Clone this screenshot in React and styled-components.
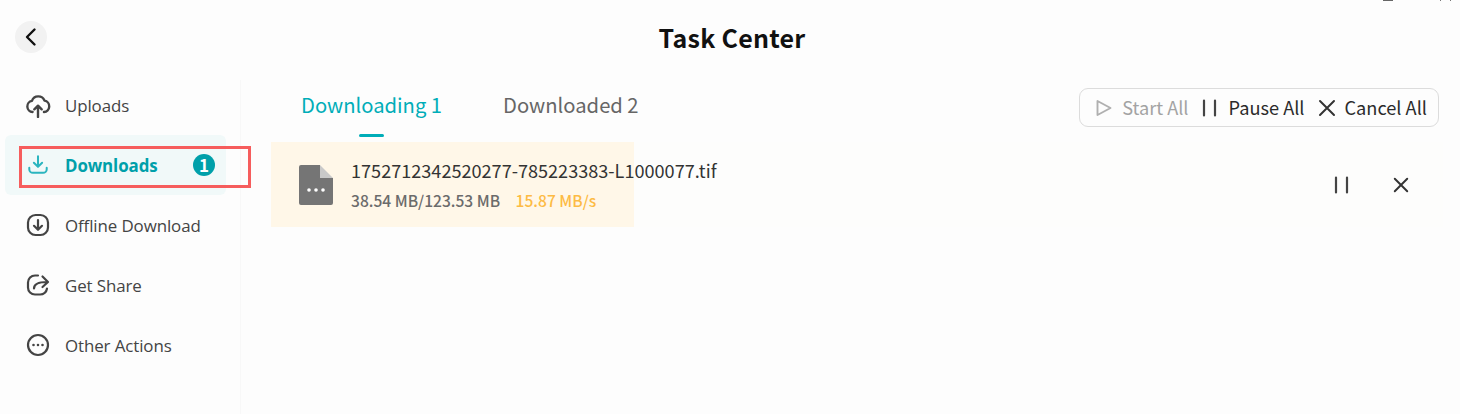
import React from 'react'
import styled, { createGlobalStyle } from 'styled-components'

const cjk = '"Noto Sans CJK SC", "Noto Sans", sans-serif'

const Global = createGlobalStyle`
  html, body { margin: 0; padding: 0; background: #fdfdfd; }
  body { font-family: ${cjk}; overflow: hidden; }
`

const Page = styled.div`
  position: relative;
  width: 1460px;
  height: 414px;
  background: #fdfdfd;
  overflow: hidden;
`

const Header = styled.header`
  height: 75px;
  padding-left: 15px;
  display: flex;
  align-items: center;
`

const BackButton = styled.button`
  width: 32px;
  height: 32px;
  margin-top: -1px;
  border: 0;
  padding: 0;
  border-radius: 50%;
  background: #f2f2f2;
  display: flex;
  align-items: center;
  justify-content: center;
`

const Title = styled.h1`
  flex: 1;
  margin: -2px 0 0 -47px;
  text-align: center;
  padding-left: 4px;
  font-size: 25px;
  line-height: 32px;
  font-weight: 700;
  color: #111;
  letter-spacing: 0.25px;
`

const Body = styled.div`
  display: flex;
  height: 339px;
`

const Sidebar = styled.nav`
  position: relative;
  width: 241px;
  box-sizing: border-box;
  padding: 0 15px 0 5px;
  display: flex;
  flex-direction: column;

  &::after {
    content: '';
    position: absolute;
    top: 5px;
    right: 0;
    bottom: 0;
    width: 1px;
    background: #f8f8f8;
  }
`

const NavItem = styled.div`
  height: 60px;
  padding: 0 11px 0 19px;
  display: flex;
  align-items: center;
  border-radius: 6px;
  background: ${p => (p.$active ? '#f1f9f9' : 'transparent')};
  color: ${p => (p.$active ? '#00a0aa' : '#444')};
`

const NavIcon = styled.span`
  width: 27px;
  height: 28px;
  margin-right: 14px;
  display: flex;
  align-items: center;
  justify-content: center;
`

const NavLabel = styled.span`
  flex: 1;
  font-family: "Open Sans", "Noto Sans", sans-serif;
  font-size: 16.9px;
  letter-spacing: -0.1px;
  font-weight: ${p => (p.$active ? 700 : 400)};
`

const Badge = styled.span`
  width: 22px;
  height: 22px;
  border-radius: 50%;
  background: #00a0aa;
  color: #fff;
  font-size: 17px;
  font-weight: 700;
  line-height: 22px;
  text-align: center;
`

const Main = styled.main`
  flex: 1;
  min-width: 0;
  padding-left: 30px;
`

const TopRow = styled.div`
  height: 67px;
  padding: 0 21px 0 30px;
  display: flex;
  align-items: flex-start;
  justify-content: space-between;
`

const Tabs = styled.div`
  display: flex;
  gap: 61px;
`

const Tab = styled.div`
  position: relative;
  height: 47px;
  margin-top: 15px;
  font-size: 20.2px;
  line-height: 30px;
  color: ${p => (p.$active ? '#00adb8' : '#666')};

  ${p => p.$active && `
    &::after {
      content: '';
      position: absolute;
      left: 58px;
      bottom: 0;
      width: 25px;
      height: 3px;
      border-radius: 2px;
      background: #00adb8;
    }
  `}
`

const Toolbar = styled.div`
  margin-top: 13px;
  height: 39px;
  box-sizing: border-box;
  padding: 0 11px 0 15px;
  border: 1px solid #dcdcdc;
  border-radius: 9px;
  display: flex;
  align-items: center;
  gap: 12px;
`

const ToolButton = styled.span`
  display: flex;
  align-items: center;
  gap: 9px;
  margin-left: ${p => p.$offset || 0}px;
  font-size: 18.2px;
  color: ${p => (p.$disabled ? '#a3a3a3' : '#2b2b2b')};
`

const ToolLabel = styled.span`
  margin-top: -2px;
`

const TaskRow = styled.div`
  position: relative;
  height: 85px;
  margin-right: 17px;
  padding-right: 34px;
  display: flex;
  align-items: center;
  background: #fdfdfc;
`

const Progress = styled.div`
  position: absolute;
  left: 0;
  top: 0;
  bottom: 0;
  background: #fff7e8;
`

const FileIcon = styled.span`
  position: relative;
  margin-left: 28px;
  margin-right: 18px;
  display: flex;
`

const TaskInfo = styled.div`
  position: relative;
  flex: 1;
  margin-top: -2px;
`

const FileName = styled.div`
  font-size: 18.1px;
  line-height: 24px;
  color: #333;
`

const TaskMeta = styled.div`
  display: flex;
  gap: 15.5px;
  margin-top: 8px;
  font-size: 15.6px;
  line-height: 20px;
  font-weight: 500;
  color: #6b6b6b;
`

const Speed = styled.span`
  color: #fdbb44;
`

const TaskActions = styled.div`
  position: relative;
  display: flex;
  align-items: center;
  gap: 41px;
`

const Annotation = styled.div`
  position: absolute;
  left: 19px;
  top: 146px;
  width: 232px;
  height: 42px;
  box-sizing: border-box;
  border: 3px solid #f65d5d;
  pointer-events: none;
`

// bottom edge of the window controls, cropped off by the top of the shot
const WindowEdge = styled.svg`
  position: absolute;
  top: 0;
  right: 0;
`

const Stroke = ({ size = 24, color = '#444', width = 2.2, children }) => (
  <svg width={size} height={size} viewBox="0 0 24 24" fill="none" stroke={color} strokeWidth={width} strokeLinecap="round" strokeLinejoin="round">
    {children}
  </svg>
)

const PauseIcon = ({ size = 20, color = '#444' }) => (
  <svg width={size} height={size} viewBox="0 0 20 20" fill="none" stroke={color} strokeWidth="2.2" strokeLinecap="round">
    <path d="M4 2.5v15M15 2.5v15" />
  </svg>
)

const CloseIcon = ({ size = 18, color = '#333', width = 2 }) => (
  <svg width={size} height={size} viewBox="0 0 18 18" fill="none" stroke={color} strokeWidth={width} strokeLinecap="round">
    <path d="M2 2l14 14M16 2L2 16" />
  </svg>
)

const navItems = [
  {
    label: 'Uploads',
    icon: (
      <Stroke size={26}>
        <path d="M7 18.5A5.2 5.2 0 0 1 6.4 8.2 6.2 6.2 0 0 1 18 8a5.3 5.3 0 0 1-.5 10.5" />
        <path d="M12 23v-10M8.6 16L12 12.6 15.4 16" />
      </Stroke>
    ),
  },
  {
    label: 'Downloads',
    active: true,
    icon: (
      <Stroke size={22} color="#2bb5bf">
        <path d="M12 2.5v11M7.5 9.5l4.5 4.5 4.5-4.5" />
        <path d="M2.5 15v1.5a4 4 0 0 0 4 4h11a4 4 0 0 0 4-4V15" />
      </Stroke>
    ),
  },
  {
    label: 'Offline Download',
    icon: (
      <Stroke size={24}>
        <rect x="2" y="2" width="20" height="20" rx="7.5" />
        <path d="M12 7v9.5M8 12.8l4 4 4-4" />
      </Stroke>
    ),
  },
  {
    label: 'Get Share',
    icon: (
      <Stroke size={24}>
        <path d="M12 2.5H9a7 7 0 0 0-7 7v5a7 7 0 0 0 7 7h5a7 7 0 0 0 7-6" />
        <path d="M8 15.5c0-4 3-6.5 13-6.5M16.5 3.5L22 9l-5.5 5" />
      </Stroke>
    ),
  },
  {
    label: 'Other Actions',
    icon: (
      <Stroke size={24}>
        <circle cx="12" cy="12" r="10" />
        <path d="M7.5 12h.01M12 12h.01M16.5 12h.01" strokeWidth="2.6" />
      </Stroke>
    ),
  },
]

const progress = 31

export default function App() {
  return (
    <Page>
      <Global />
      <WindowEdge width="80" height="2" viewBox="0 0 80 2">
        <path d="M3 .5h10" stroke="#666" />
        <path d="M60.5 0v1M70.5 0v1" stroke="#777" />
      </WindowEdge>
      <Header>
        <BackButton aria-label="Back">
          <Stroke size={24} color="#111" width={2.4}>
            <path d="M15.5 4.5L8 12l7.5 7.5" />
          </Stroke>
        </BackButton>
        <Title>Task Center</Title>
      </Header>
      <Body>
        <Sidebar>
          {navItems.map(item => (
            <NavItem key={item.label} $active={item.active}>
              <NavIcon>{item.icon}</NavIcon>
              <NavLabel $active={item.active}>{item.label}</NavLabel>
              {item.active && <Badge>1</Badge>}
            </NavItem>
          ))}
        </Sidebar>
        <Main>
          <TopRow>
            <Tabs>
              <Tab $active>Downloading 1</Tab>
              <Tab>Downloaded 2</Tab>
            </Tabs>
            <Toolbar>
              <ToolButton $disabled>
                <svg width="18" height="18" viewBox="0 0 18 18" fill="none" stroke="#b0b0b0" strokeWidth="1.9" strokeLinejoin="round">
                  <path d="M2.5 2v14L15.5 9z" />
                </svg>
                <ToolLabel>Start All</ToolLabel>
              </ToolButton>
              <ToolButton $offset={-1}>
                <PauseIcon size={20} />
                <ToolLabel>Pause All</ToolLabel>
              </ToolButton>
              <ToolButton $offset={1}>
                <CloseIcon size={18} />
                <ToolLabel>Cancel All</ToolLabel>
              </ToolButton>
            </Toolbar>
          </TopRow>
          <TaskRow>
            <Progress style={{ width: `${progress}%` }} />
            <FileIcon>
              <svg width="34" height="40" viewBox="0 0 34 40">
                <path d="M2 0h19v11a2 2 0 0 0 2 2h11v25a2 2 0 0 1-2 2H2a2 2 0 0 1-2-2V2a2 2 0 0 1 2-2z" fill="#757575" />
                <path d="M21 0l13 13H21z" fill="#c9c9c9" />
                <circle cx="10" cy="25" r="1.8" fill="#fff" />
                <circle cx="17" cy="25" r="1.8" fill="#fff" />
                <circle cx="24" cy="25" r="1.8" fill="#fff" />
              </svg>
            </FileIcon>
            <TaskInfo>
              <FileName>1752712342520277-785223383-L1000077.tif</FileName>
              <TaskMeta>
                <span>38.54 MB/123.53 MB</span>
                <Speed>15.87 MB/s</Speed>
              </TaskMeta>
            </TaskInfo>
            <TaskActions>
              <PauseIcon size={20} />
              <CloseIcon size={16} width={2.2} />
            </TaskActions>
          </TaskRow>
        </Main>
      </Body>
      <Annotation />
    </Page>
  )
}
